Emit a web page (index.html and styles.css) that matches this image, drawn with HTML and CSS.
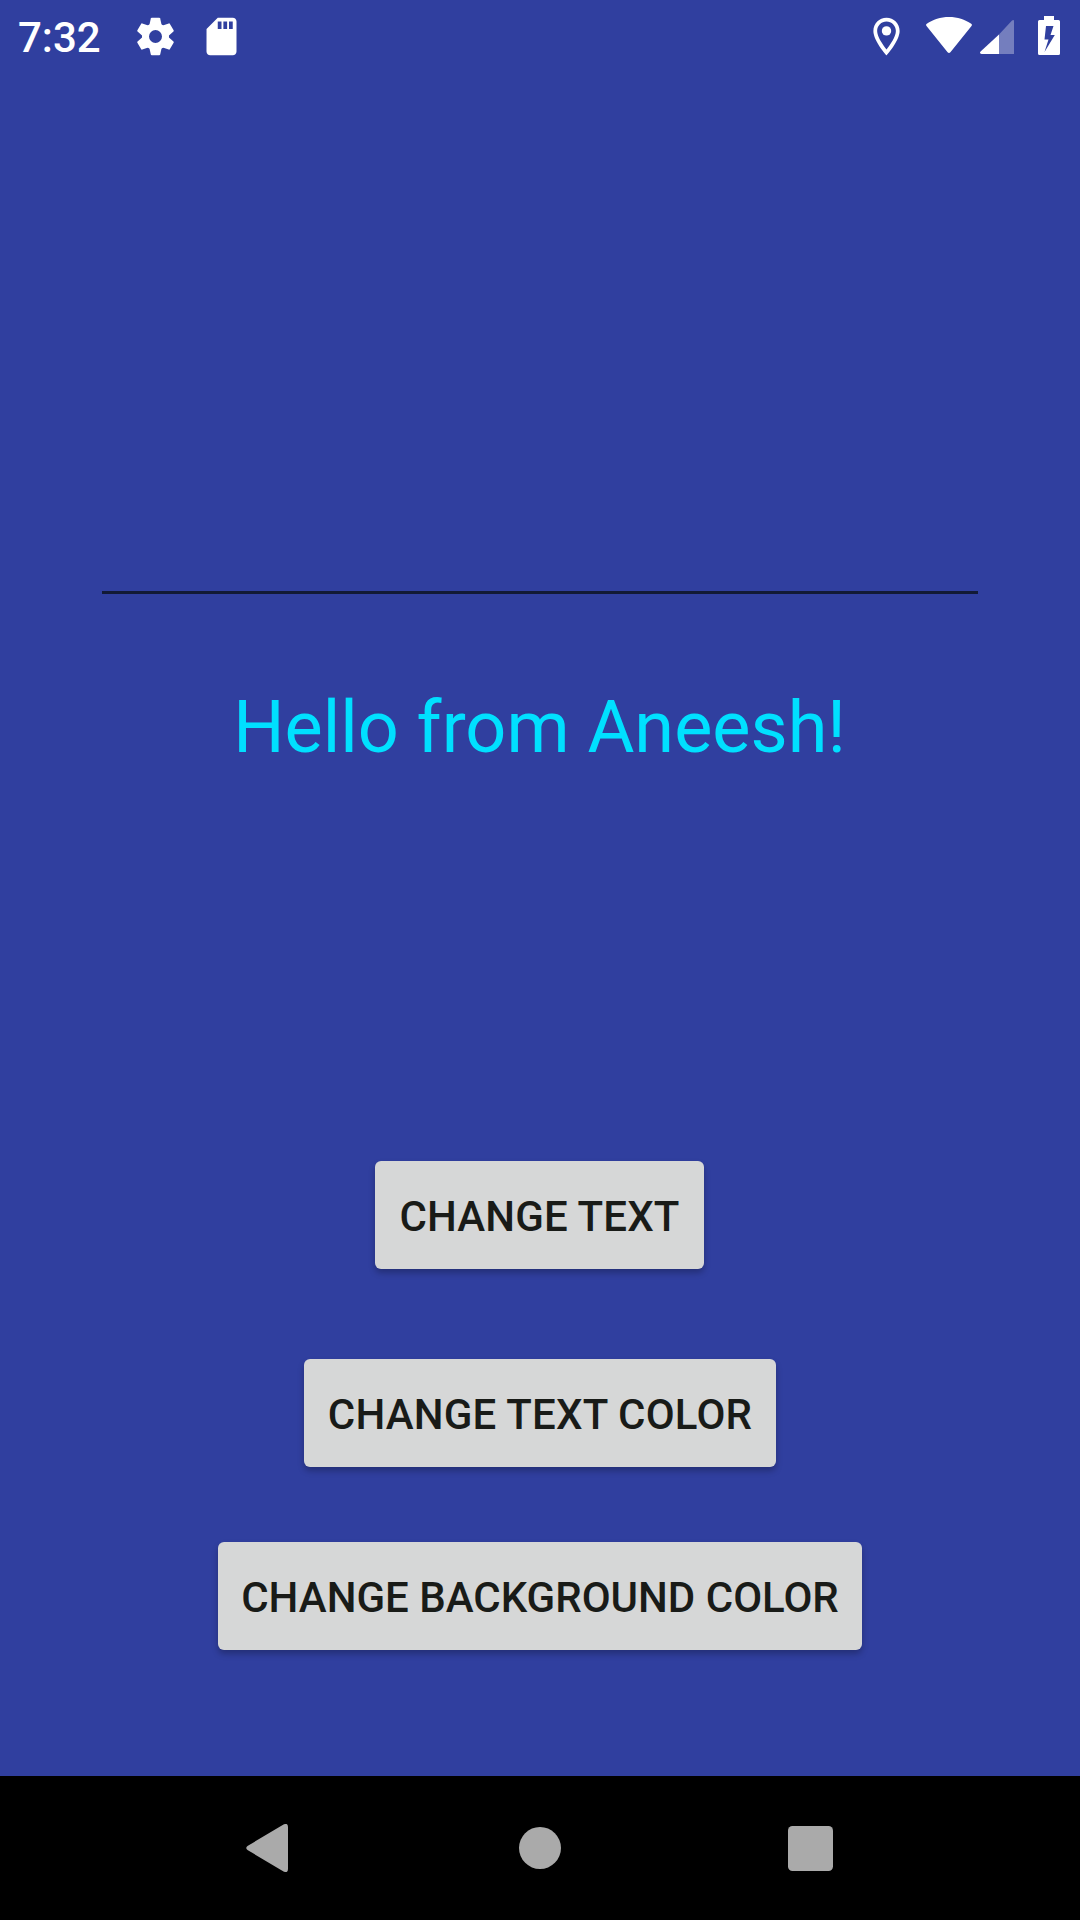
FILE: index.html
```html
<!DOCTYPE html>
<html lang="en">
<head>
<meta charset="utf-8">
<title>Hello</title>
<link rel="stylesheet" href="styles.css">
</head>
<body>
<div class="screen">
  <header class="status">
    <span class="clock">7:32</span>
    <svg class="icon gear" viewBox="-22.500 -22.500 45 45">
      <defs><path id="tooth" d="M-6.200-11L-4.700-18Q-4.500-18.800-3.700-18.800H3.700Q4.500-18.800 4.700-18L6.200-11Z"/></defs>
      <circle r="10" fill="none" stroke="#fff" stroke-width="7"/>
      <use href="#tooth"/>
      <use href="#tooth" transform="rotate(60)"/>
      <use href="#tooth" transform="rotate(120)"/>
      <use href="#tooth" transform="rotate(180)"/>
      <use href="#tooth" transform="rotate(240)"/>
      <use href="#tooth" transform="rotate(300)"/>
    </svg>
    <svg class="icon card" viewBox="0 0 24 24"><path d="M18 2h-8L4.020 8 4 20c0 1.100.9 2 2 2h12c1.100 0 2-.9 2-2V4c0-1.100-.9-2-2-2zm-6 6h-2V4h2v4zm3 0h-2V4h2v4zm3 0h-2V4h2v4z"/></svg>
    <svg class="icon pin" viewBox="0 0 24 24"><path fill-rule="evenodd" d="M12 2C8.130 2 5 5.130 5 9c0 5.250 7 13 7 13s7-7.750 7-13c0-3.870-3.130-7-7-7zM7 9c0-2.760 2.240-5 5-5s5 2.240 5 5c0 2.880-2.880 7.190-5 9.880C9.920 16.210 7 11.850 7 9z"/><circle cx="12" cy="9" r="2.500"/></svg>
    <svg class="wifi" viewBox="0 0 46 36"><path d="M.7 9.200C-.2 8.300-.1 7.500.8 6.800C7 2.400 14.500 0 23 0S39 2.400 45.200 6.800C46.100 7.500 46.200 8.300 45.300 9.200L24.400 35.200Q23 36.600 21.600 35.200Z"/></svg>
    <svg class="signal" viewBox="0 0 34 34"><path opacity=".33" d="M19 14.500L32 .6Q34-.8 34 1.500V34H19Z"/><path d="M19 14.500V34H1.500Q-1 33.500.6 31.600Z"/></svg>
    <svg class="battery" viewBox="0 0 22 39"><path fill-rule="evenodd" d="M6 0H16V4H20.500Q22 4 22 5.500V37.500Q22 39 20.500 39H1.500Q0 39 0 37.500V5.500Q0 4 1.500 4H6ZM8 10L6.500 23.500H10.500L6.500 36L16.800 19H12.500L15.500 10Z"/></svg>
  </header>
  <main class="content">
    <div class="field"></div>
    <div class="greeting">Hello from Aneesh!</div>
    <div class="actions">
      <button class="button text">CHANGE TEXT</button>
      <button class="button color">CHANGE TEXT COLOR</button>
      <button class="button background">CHANGE BACKGROUND COLOR</button>
    </div>
  </main>
  <nav class="navbar">
    <svg class="back" viewBox="0 0 42 48"><path d="M37.500.5Q42-1.500 42 3V45Q42 49.500 37.500 47.500L1.500 26Q-1 24 1.500 22Z"/></svg>
    <svg class="home" viewBox="0 0 42 42"><circle cx="21" cy="21" r="21"/></svg>
    <svg class="recent" viewBox="0 0 45 45"><rect width="45" height="45" rx="4.500"/></svg>
  </nav>
</div>
</body>
</html>
```
FILE: styles.css
```css
* {
  box-sizing: border-box;
}

body {
  margin: 0;
  font-family: Roboto, "Liberation Sans", sans-serif;
}

svg {
  display: block;
  flex: none;
}

.screen {
  display: flex;
  flex-direction: column;
  width: 1080px;
  height: 1920px;
  background: #303f9f;
}

.status {
  display: flex;
  align-items: center;
  height: 72px;
  padding: 0 20px 0 18px;
  fill: #fff;
}

.clock {
  width: 114.5px;
  color: #fff;
  font-size: 42px;
  font-weight: 500;
  line-height: 50px;
  padding-top: 3px;
}

.icon {
  width: 45px;
  height: 45px;
}

.card {
  margin-left: 21.5px;
}

.pin {
  margin-left: auto;
}

.wifi {
  width: 46px;
  height: 36px;
  margin: 0 8px 2px 17px;
}

.signal {
  width: 34px;
  height: 34px;
  margin-top: 2px;
}

.battery {
  width: 22px;
  height: 39px;
  margin: 0 0 1px 24px;
}

.content {
  display: flex;
  flex: 1;
  flex-direction: column;
  align-items: center;
}

.field {
  width: 876px;
  height: 522px;
  border-bottom: 3px solid #121a36;
}

.greeting {
  margin-top: 92px;
  padding-right: 1px;
  color: #00e0ff;
  font-size: 72px;
  line-height: 84px;
  white-space: nowrap;
}

.actions {
  display: flex;
  flex-direction: column;
  align-items: center;
  margin-top: 391px;
}

.button {
  height: 108px;
  padding: 4px 0 0;
  border: 0;
  border-radius: 6px;
  background: #d6d7d7;
  box-shadow: 0 4px 6px rgba(0, 0, 0, .25);
  color: #191b18;
  font: 500 42px/50px Roboto, "Liberation Sans", sans-serif;
  white-space: nowrap;
}

.text {
  width: 329px;
  margin-right: 1px;
  letter-spacing: .15px;
}

.color {
  width: 472px;
  margin-top: 90px;
  letter-spacing: .2px;
}

.background {
  width: 644px;
  margin-top: 75px;
}

.navbar {
  display: flex;
  align-items: center;
  height: 144px;
  padding-left: 246px;
  background: #000;
  fill: #aaa;
}

.back {
  width: 42px;
  height: 48px;
}

.home {
  width: 42px;
  height: 42px;
  margin-left: 231px;
}

.recent {
  width: 45px;
  height: 45px;
  margin-left: 226.5px;
}
```
